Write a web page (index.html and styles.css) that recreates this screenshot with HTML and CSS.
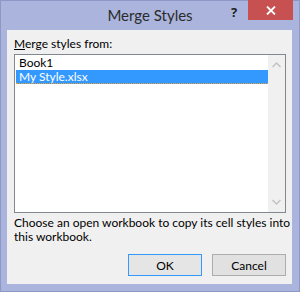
FILE: index.html
```html
<!DOCTYPE html>
<html>
<head>
<meta charset="utf-8">
<link rel="stylesheet" href="styles.css">
</head>
<body>
<div class="window">
  <div class="titlebar">
    <div class="title">Merge Styles</div>
    <div class="help">?</div>
    <div class="close">
      <svg width="10" height="9" viewBox="0 0 10 9"><path d="M1 0.5 L9 8.5 M9 0.5 L1 8.5" stroke="#fff" stroke-width="1.8"/></svg>
    </div>
  </div>
  <div class="client">
    <div class="label"><u>M</u>erge styles from:</div>
    <div class="listbox">
      <div class="items">
        <div class="item">Book1</div>
        <div class="item selected">My Style.xlsx</div>
      </div>
      <div class="scrollbar">
        <svg class="arrow" width="9" height="6" viewBox="0 0 9 6"><path d="M0.5 5 L4.5 1 L8.5 5" fill="none" stroke="#c2c2c2" stroke-width="1.4"/></svg>
        <svg class="arrow" width="9" height="6" viewBox="0 0 9 6"><path d="M0.5 1 L4.5 5 L8.5 1" fill="none" stroke="#c2c2c2" stroke-width="1.4"/></svg>
      </div>
    </div>
    <p class="desc">Choose an open workbook to copy its cell styles into<br>this workbook.</p>
    <div class="buttons">
      <button class="btn default">OK</button>
      <button class="btn">Cancel</button>
    </div>
  </div>
</div>
</body>
</html>
```
FILE: styles.css
```css
html, body {
  margin: 0;
  padding: 0;
}
body {
  width: 300px;
  height: 292px;
  overflow: hidden;
  font-family: Lato, "Noto Sans", sans-serif;
  font-size: 12px;
  color: #000;
}
.window {
  box-sizing: border-box;
  width: 300px;
  height: 292px;
  background: #aab4dc;
  border: 1px solid #8e98c6;
  display: flex;
  flex-direction: column;
}
.titlebar {
  height: 29px;
  display: flex;
  align-items: flex-start;
}
.title {
  flex: 1;
  text-align: center;
  font-size: 15px;
  color: #2b2b2b;
  padding-top: 5px;
  padding-left: 72px;
}
.help {
  font-family: "Noto Sans", sans-serif;
  font-weight: bold;
  font-size: 13px;
  color: #222;
  padding-top: 2px;
  width: 14px;
  text-align: center;
  margin-right: 7px;
}
.close {
  width: 45px;
  height: 20px;
  margin-top: -1px;
  margin-right: 6px;
  background: #c75050;
  display: flex;
  align-items: center;
  justify-content: center;
}
.client {
  flex: 1;
  margin: 0 7px 7px 6px;
  background: #f0f0f0;
  padding: 6px 6px 0 7px;
  display: flex;
  flex-direction: column;
}
.label {
  line-height: 16px;
  height: 18px;
}
.listbox {
  box-sizing: border-box;
  width: 272px;
  height: 159px;
  border: 1px solid #828790;
  background: #fff;
  display: flex;
}
.items {
  flex: 1;
  padding: 1px 0 0 1px;
}
.item {
  box-sizing: border-box;
  height: 14px;
  line-height: 13px;
  padding-left: 3px;
}
.item.selected {
  background: #3399ff;
  color: #fff;
  border-bottom: 1px dotted #f0a030;
}
.scrollbar {
  width: 17px;
  background: #f0f0f0;
  display: flex;
  flex-direction: column;
  justify-content: space-between;
  align-items: center;
  padding: 7px 0 7px;
}
.arrow {
  display: block;
}
.desc {
  margin: 3px -6px 0 0;
  line-height: 14px;
  white-space: nowrap;
}
.buttons {
  display: flex;
  justify-content: flex-end;
  gap: 10px;
  margin-top: 10px;
}
.btn {
  box-sizing: border-box;
  width: 74px;
  height: 22px;
  border: 1px solid #adadad;
  background: #e1e1e1;
  font-family: inherit;
  font-size: 12px;
  color: #000;
  padding: 0;
}
.btn.default {
  border-color: #3399ff;
  background: #e5e5e5;
}
```
